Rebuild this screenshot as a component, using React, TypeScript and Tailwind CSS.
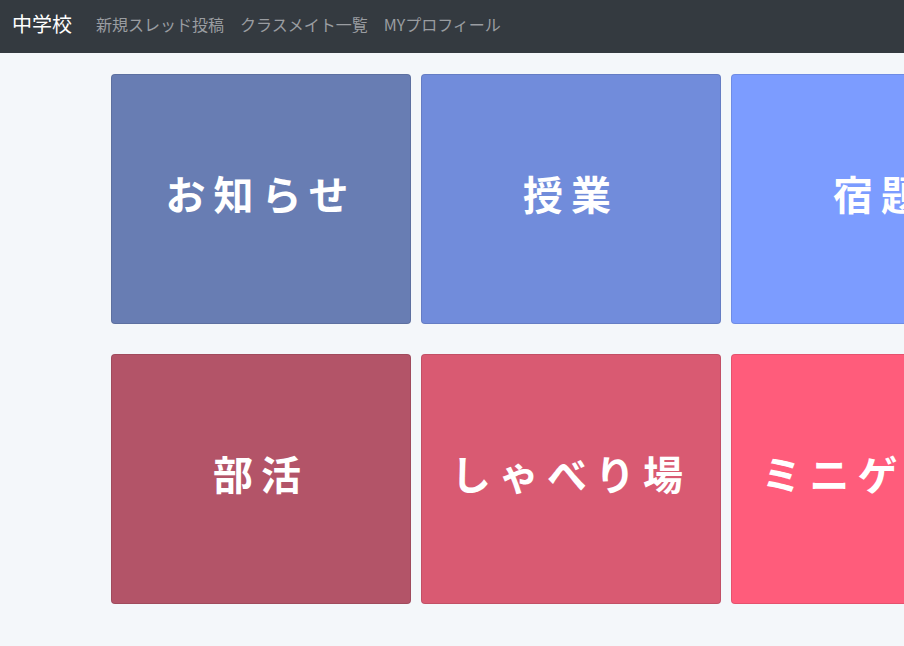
const cards = [
  [
    { label: 'お知らせ', color: 'bg-[#687db3]' },
    { label: '授業', color: 'bg-[#718cdb]' },
    { label: '宿題', color: 'bg-[#7c9cff]' },
  ],
  [
    { label: '部活', color: 'bg-[#b35468]' },
    { label: 'しゃべり場', color: 'bg-[#d95a72]' },
    { label: 'ミニゲーム', color: 'bg-[#ff5c7b]' },
  ],
];

export default function App() {
  return (
    <div className="min-h-[646px] w-[904px] overflow-hidden bg-[#f4f7fa] font-['Noto_Sans_CJK_JP',sans-serif]">
      {/* Navbar */}
      <nav className="flex h-[53px] items-center bg-[#343a40] px-3 pb-[5px]">
        <span className="mr-[24px] text-[20px] text-white">中学校</span>
        <div className="flex gap-4 text-[16px] text-[#9a9da1]">
          <span>新規スレッド投稿</span>
          <span>クラスメイト一覧</span>
          <span>MYプロフィール</span>
        </div>
      </nav>

      {/* Menu grid */}
      <div className="flex flex-col gap-[30px] pl-[111px] pt-[21px]">
        {cards.map((row, i) => (
          <div key={i} className="flex gap-[10px]">
            {row.map((card) => (
              <div
                key={card.label}
                className={`flex h-[250px] w-[300px] shrink-0 items-center justify-center rounded border border-black/10 pb-[12px] ${card.color}`}
              >
                <span className="whitespace-nowrap text-[40px] font-bold tracking-[8px] text-white">
                  {card.label}
                </span>
              </div>
            ))}
          </div>
        ))}
      </div>
    </div>
  );
}
